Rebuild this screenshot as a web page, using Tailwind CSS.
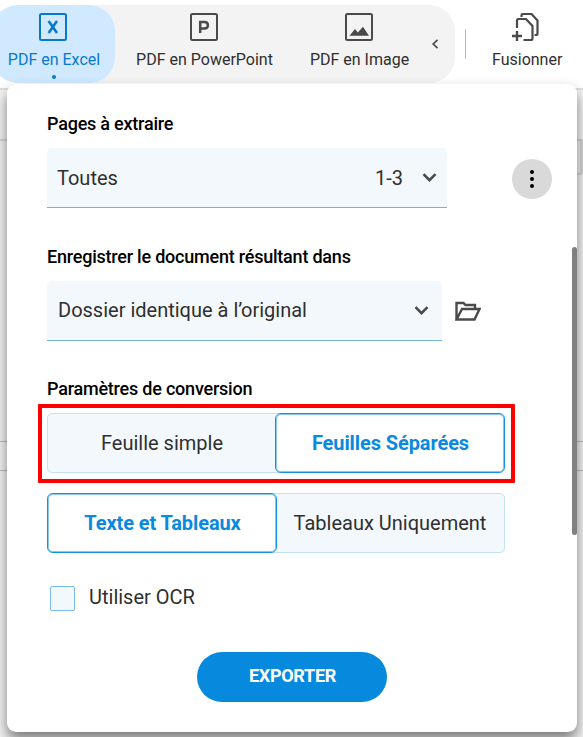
<!DOCTYPE html>
<html lang="fr">
<head>
  <meta charset="UTF-8" />
  <meta name="viewport" content="width=device-width, initial-scale=1.0" />
  <title>PDF en Excel</title>
  <script src="https://cdn.jsdelivr.net/npm/@tailwindcss/browser@4"></script>
</head>
<body class="relative h-[737px] w-[583px] overflow-hidden bg-white font-['Roboto',sans-serif] text-[#2f2f2f]">
  <!-- Barre d'outils -->
  <header class="flex h-[90px] items-start border-b-2 border-[#dedede] pt-[5px] whitespace-nowrap">
    <nav class="-ml-2 flex h-[78px] w-[463px] shrink-0 overflow-hidden rounded-[26px] bg-[#f3f3f3]">
      <a class="flex w-[123px] flex-col items-center rounded-[26px] bg-[#d1e9ff] pt-2 text-[#0879c8]">
        <svg class="mr-0.5 h-7 w-7" viewBox="0 0 28 28" fill="none" stroke="currentColor">
          <rect x="1" y="1" width="26" height="26" rx="1.5" stroke-width="2" />
          <path d="M9.6 8 18 20M18 8 9.6 20" stroke-width="2.6" />
        </svg>
        <span class="mt-[9px] ml-px text-base leading-5">PDF en Excel</span>
        <span class="mt-[5px] h-1 w-1 rounded-full bg-[#0879c8]"></span>
      </a>
      <a class="flex w-[179px] flex-col items-center pt-2">
        <svg class="mr-0.5 h-7 w-7 text-[#4a4a4a]" viewBox="0 0 28 28" fill="none" stroke="currentColor">
          <rect x="1" y="1" width="26" height="26" rx="1.5" stroke-width="2" />
          <path d="M10.2 20V9H14.5C19 9 19 15.4 14.5 15.4H10.2" stroke-width="2.5" />
        </svg>
        <span class="mt-[9px] text-base leading-5">PDF en PowerPoint</span>
      </a>
      <a class="flex w-[131px] flex-col items-center pt-2">
        <svg class="mr-0.5 h-7 w-7 text-[#4a4a4a]" viewBox="0 0 28 28" fill="none" stroke="currentColor">
          <rect x="1" y="1" width="26" height="26" rx="1.5" stroke-width="2" />
          <path d="M4.5 22.7 10 16l2.8 3.4L18 13.8l6 8.9Z" fill="currentColor" stroke="none" />
        </svg>
        <span class="mt-[9px] text-base leading-5">PDF en Image</span>
      </a>
      <span class="pt-[34px]">
        <svg class="ml-1.5 h-2.5 w-2 text-[#4a4a4a]" viewBox="0 0 8 10" fill="none" stroke="currentColor" stroke-width="1.7">
          <path d="M6.5.8 2.2 5l4.3 4.2" />
        </svg>
      </span>
    </nav>
    <span class="mt-6 ml-2.5 h-[30px] w-px shrink-0 bg-[#b8b8b8]"></span>
    <a class="ml-[26px] flex shrink-0 flex-col items-center pt-2">
      <svg class="-ml-1 h-7 w-7 text-[#4a4a4a]" viewBox="0 0 28 28" fill="none" stroke="currentColor" stroke-width="2.2">
        <path d="M6 15V7.500Q6 6 7.500 6H15L21.500 13V25.500Q21.500 27 20 27H12.500" />
        <path d="M10.500 4V2.500Q10.500 1 12 1H20.500L26.500 7.500V20.500Q26.500 22 25 22H23.500" />
        <path d="M6 18V28M1 23H11" stroke-width="2.400" />
      </svg>
      <span class="mt-[9px] text-base leading-5">Fusionner</span>
    </a>
  </header>

  <!-- Contenu derrière le panneau -->
  <main class="h-[647px] bg-[#f5f5f5]">
    <div class="h-[51px] border-b-2 border-[#d8d8d8]"></div>
    <div class="flex h-[301px] justify-end border-b border-[#bdbdbd]">
      <span class="-mr-px h-[34px] w-[14px] rounded-br border-r-4 border-b-2 border-[#d8d8d8]"></span>
    </div>
    <div class="h-[29px] border-b border-[#bdbdbd]"></div>
  </main>

  <!-- Panneau des options -->
  <section class="absolute top-[84px] left-[7px] h-[648px] w-[570px] rounded-[9px] bg-white px-10 pt-[29px] whitespace-nowrap shadow-[0_8px_14px_0_rgba(0,0,0,0.5)]">
    <h2 class="text-lg leading-[22px] font-medium tracking-[-0.22px] text-black">Pages à extraire</h2>
    <div class="mt-[13px] flex h-[60px] items-center">
      <button class="flex h-[60px] w-[400px] shrink-0 items-center rounded-t-[5px] border-b border-[#76b0d9] bg-[#f3f8fd] px-2.5 text-xl">
        <span>Toutes</span>
        <span class="ml-auto">1-3</span>
        <svg class="ml-[19px] h-[9px] w-[15px] text-[#4a4a4a]" viewBox="0 0 15 9" fill="none" stroke="currentColor" stroke-width="2.6">
          <path d="M1.5 1.2 7.5 7.2 13.5 1.2" />
        </svg>
      </button>
      <button class="mt-0.5 ml-[65px] flex h-10 w-10 shrink-0 items-center justify-center rounded-full bg-[#d9d9d9]">
        <svg class="h-5 w-1" viewBox="0 0 4 20">
          <circle cx="2" cy="3" r="2" />
          <circle cx="2" cy="10" r="2" />
          <circle cx="2" cy="17" r="2" />
        </svg>
      </button>
    </div>

    <h2 class="mt-[38px] text-lg leading-[22px] font-medium tracking-[-0.22px] text-black">Enregistrer le document résultant dans</h2>
    <div class="mt-[13px] flex items-center">
      <button class="flex h-[60px] w-[395px] items-center justify-between rounded-t-[5px] border-b border-[#76b5e0] bg-[#f3f8fd] pr-[13px] pb-px pl-[11px] text-xl">
        <span>Dossier identique à l’original</span>
        <svg class="h-[9px] w-[15px] text-[#4a4a4a]" viewBox="0 0 15 9" fill="none" stroke="currentColor" stroke-width="2.6">
          <path d="M1.5 1.2 7.5 7.2 13.5 1.2" />
        </svg>
      </button>
      <svg class="ml-[13px] h-5 w-[26px] text-[#4a4a4a]" viewBox="0 0 26 20" fill="none" stroke="currentColor" stroke-width="2.4">
        <path d="M1.500 18.500V2H8.500L10.500 4H20V8M1.500 18.500 7 8H24.500L19.500 18.500Z" />
      </svg>
    </div>

    <h2 class="mt-[37px] text-lg leading-[22px] font-medium tracking-[-0.22px] text-black">Paramètres de conversion</h2>
    <div class="-ml-[9px] mt-1 h-[79px] w-[477px] rounded-[1px] border-4 border-[#ff0000] p-[5px]">
      <div class="flex h-[60px] w-[458px] rounded-[5px] border border-[#c3e1f5] bg-[#f3f8fd] text-xl">
        <button class="flex-1 pb-px">Feuille simple</button>
        <button class="-m-px w-[230px] rounded-[6px] border border-[#1590df] bg-white pl-px font-bold tracking-[-0.1px] text-[#0a8adf] ring ring-[#1590df]/50 ring-inset">Feuilles Séparées</button>
      </div>
    </div>
    <div class="mt-2.5 flex h-[60px] w-[458px] rounded-[5px] border border-[#c3e1f5] bg-[#f3f8fd] text-xl">
      <button class="-m-px w-[230px] rounded-[6px] border border-[#1590df] bg-white pl-px font-bold tracking-[-0.1px] text-[#0a8adf] ring ring-[#1590df]/50 ring-inset">Texte et Tableaux</button>
      <button class="flex-1">Tableaux Uniquement</button>
    </div>

    <label class="mt-[33px] ml-[3px] flex h-[25px] items-center text-xl">
      <span class="h-[25px] w-[25px] rounded-[2px] border border-[#76bcec] bg-[#f3f8fd]"></span>
      <span class="-mt-[3px] ml-3.5">Utiliser OCR</span>
    </label>

    <button class="mt-[41px] ml-[150px] h-[50px] w-[190px] rounded-full bg-[#078ade] pb-0.5 pl-px text-lg font-bold tracking-[-0.3px] text-white">EXPORTER</button>

    <!-- Barre de défilement -->
    <span class="absolute top-[163px] right-0 h-[288px] w-[5px] rounded-full bg-[#808080]"></span>
  </section>
</body>
</html>
